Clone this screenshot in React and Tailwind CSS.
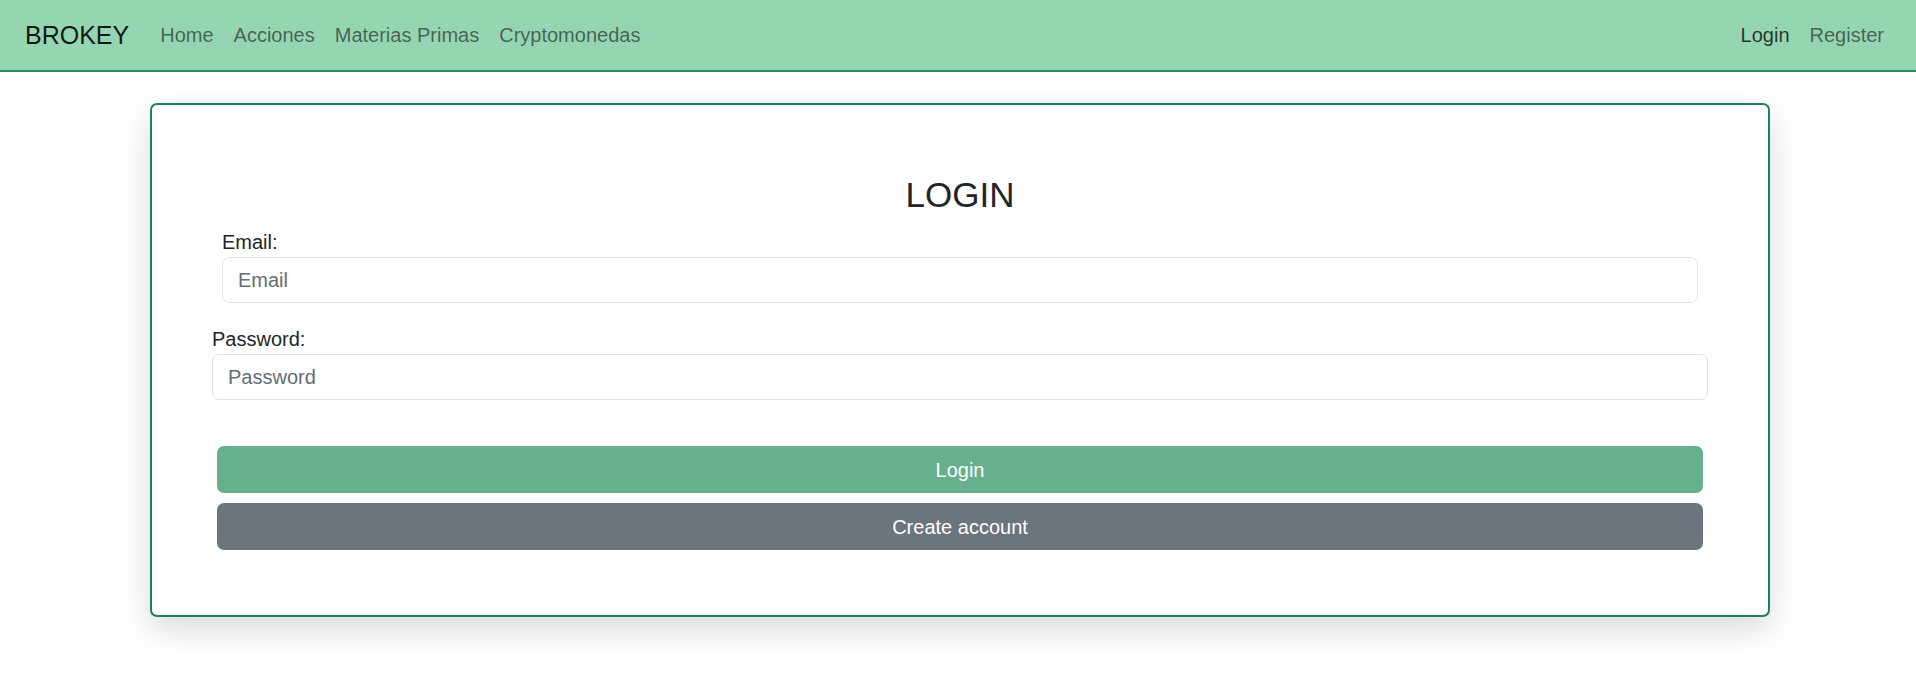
import React from "react";

const font = { fontFamily: '"Liberation Sans", Arial, sans-serif' };

const NavLink = ({ children, active }) => (
  <a
    href="#"
    className={
      active
        ? "px-[10px] text-[20px] leading-[30px] text-black/75"
        : "px-[10px] text-[20px] leading-[30px] text-black/55"
    }
  >
    {children}
  </a>
);

const App = () => {
  return (
    <div className="min-h-screen bg-white text-[#212529]" style={font}>
      {/* Navbar */}
      <nav className="flex h-[72px] items-center border-b-2 border-[#2a8a60] bg-[#95d5b2] pl-[25px] pr-[22px]">
        <a href="#" className="mr-[21px] text-[25px] leading-[36px] text-black/90">
          BROKEY
        </a>
        <div className="flex items-center">
          <NavLink>Home</NavLink>
          <NavLink>Acciones</NavLink>
          <NavLink>Materias Primas</NavLink>
          <NavLink>Cryptomonedas</NavLink>
        </div>
        <div className="ml-auto flex items-center">
          <NavLink active>Login</NavLink>
          <NavLink>Register</NavLink>
        </div>
      </nav>

      {/* Login card */}
      <div className="ml-[150px] mt-[31px] w-[1620px] rounded-[7px] border-2 border-[#1e8058] bg-white pt-[69px] pb-[65px] shadow-[0_12px_32px_rgba(0,0,0,0.15)]">
        <h2 className="mb-[11px] text-center text-[35px] leading-[42px] text-[#212529]">LOGIN</h2>

        <div className="px-[70px]">
          <label className="block text-[20px] leading-[30px]">Email:</label>
          <input
            type="email"
            placeholder="Email"
            className="block h-[46px] w-full rounded-[7px] border border-[#dee2e6] px-[15px] text-[20px] outline-none placeholder:text-[#646d76]"
          />
        </div>

        <div className="mt-[21px] px-[60px]">
          <label className="block text-[20px] leading-[30px]">Password:</label>
          <input
            type="password"
            placeholder="Password"
            className="block h-[46px] w-full rounded-[7px] border border-[#dee2e6] px-[15px] text-[20px] outline-none placeholder:text-[#646d76]"
          />
        </div>

        <div className="mt-[46px] flex flex-col gap-[10px] px-[65px]">
          <button className="h-[47px] w-full rounded-[7px] bg-[#67b08d] text-[20px] text-white">
            Login
          </button>
          <button className="h-[47px] w-full rounded-[7px] bg-[#6c757d] text-[20px] text-white">
            Create account
          </button>
        </div>
      </div>
    </div>
  );
};

export default App;
